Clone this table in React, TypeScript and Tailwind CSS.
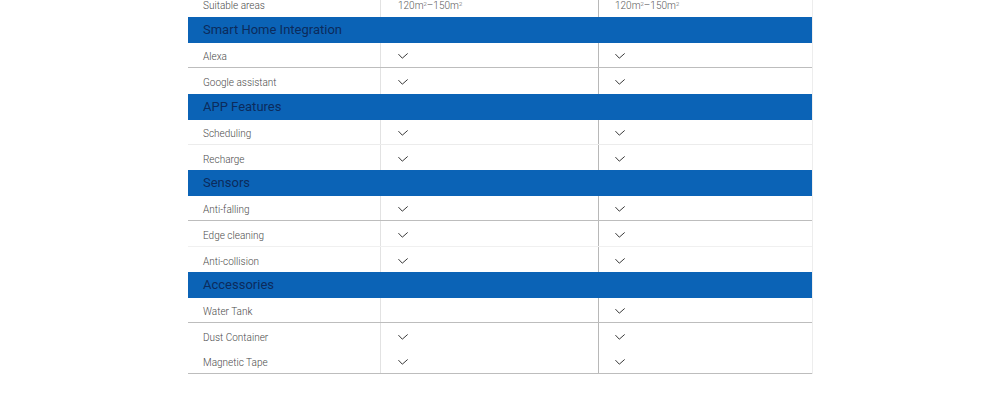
import React from "react";

const Check = () => (
  <svg width="10" height="7" viewBox="0 0 10 7" fill="none" className="block">
    <path d="M0.7 1.4 L4.3 5.2 L9.4 0.7" stroke="#3a3a3a" strokeWidth="1" strokeLinecap="round" strokeLinejoin="round" />
  </svg>
);

type Row = { label: string; a: React.ReactNode; b: React.ReactNode; h: string; border: string };

const area = (
  <span>
    120m<sup className="text-[6px]">2</sup>–150m<sup className="text-[6px]">2</sup>
  </span>
);

const groups: { title: string; h: string; rows: Row[] }[] = [
  {
    title: "Smart Home Integration",
    h: "h-[26px]",
    rows: [
      { label: "Alexa", a: <Check />, b: <Check />, h: "h-[25px]", border: "border-b border-[#bdbdbd]" },
      { label: "Google assistant", a: <Check />, b: <Check />, h: "h-[26px]", border: "" },
    ],
  },
  {
    title: "APP Features",
    h: "h-[26px]",
    rows: [
      { label: "Scheduling", a: <Check />, b: <Check />, h: "h-[25px]", border: "border-b border-[#ececec]" },
      { label: "Recharge", a: <Check />, b: <Check />, h: "h-[25px]", border: "" },
    ],
  },
  {
    title: "Sensors",
    h: "h-[26px]",
    rows: [
      { label: "Anti-falling", a: <Check />, b: <Check />, h: "h-[25px]", border: "border-b border-[#bdbdbd]" },
      { label: "Edge cleaning", a: <Check />, b: <Check />, h: "h-[26px]", border: "border-b border-[#f0f0f0]" },
      { label: "Anti-collision", a: <Check />, b: <Check />, h: "h-[25px]", border: "" },
    ],
  },
  {
    title: "Accessories",
    h: "h-[26px]",
    rows: [
      { label: "Water Tank", a: null, b: <Check />, h: "h-[25px]", border: "border-b border-[#bdbdbd]" },
      { label: "Dust Container", a: <Check />, b: <Check />, h: "h-[26px]", border: "" },
      { label: "Magnetic Tape", a: <Check />, b: <Check />, h: "h-[25px]", border: "border-b border-[#bdbdbd]" },
    ],
  },
];

function DataRow({ label, a, b, h, border }: Row) {
  return (
    <div className={`flex ${h} ${border} box-border`}>
      <div className="w-[192px] flex items-center pt-[3px] pl-[15px] text-[10px] text-[#4a4a4a]">{label}</div>
      <div className="w-[218px] flex items-center pt-[3px] pl-[17px] border-l border-[#e2e2e2] text-[10px] text-[#5a5a5a]">{a}</div>
      <div className="flex-1 flex items-center pt-[3px] pl-[16px] border-l border-[#b8b8b8] text-[10px] text-[#5a5a5a]">{b}</div>
    </div>
  );
}

export default function App() {
  return (
    <div className="w-[1000px] h-[406px] bg-white overflow-hidden" style={{ fontFamily: "Roboto, 'Liberation Sans', sans-serif" }}>
      <div className="w-[625px] ml-[188px] -mt-[9px] border-r border-[#ededed] font-light">
        <DataRow label="Suitable areas" a={area} b={area} h="h-[26px]" border="" />
        {groups.map((g) => (
          <div key={g.title}>
            <div className={`${g.h} bg-[#0b63b6] flex items-center pl-[15px] text-[13px] text-[#0c2b5c] font-normal`}>
              {g.title}
            </div>
            {g.rows.map((r) => (
              <DataRow key={r.label} {...r} />
            ))}
          </div>
        ))}
      </div>
    </div>
  );
}
